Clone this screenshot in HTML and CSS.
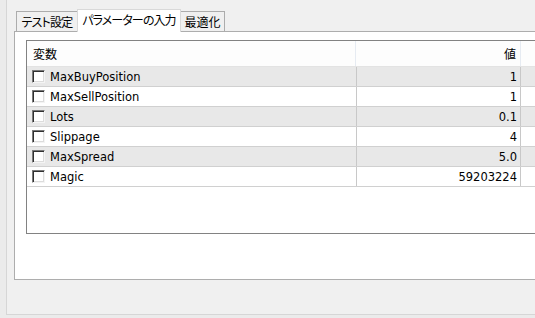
FILE: index.html
```html
<!DOCTYPE html>
<html lang="ja">
<head>
  <meta charset="UTF-8" />
  <title>テスター</title>
  <link rel="stylesheet" href="styles.css">
</head>
<body>
  <div class="frame">
    <div class="tabs">
      <div class="tab tab-test">テスト設定</div>
      <div class="tab tab-params active">パラメーターの入力</div>
      <div class="tab tab-opt">最適化</div>
    </div>
    <div class="panel">
      <div class="list">
        <div class="list-head">
          <div class="col-name">変数</div>
          <div class="col-value">値</div>
          <div class="col-rest"></div>
        </div>
        <div class="row">
          <div class="col-name"><span class="check"></span>MaxBuyPosition</div>
          <div class="col-value">1</div>
          <div class="col-rest"></div>
        </div>
        <div class="row">
          <div class="col-name"><span class="check"></span>MaxSellPosition</div>
          <div class="col-value">1</div>
          <div class="col-rest"></div>
        </div>
        <div class="row">
          <div class="col-name"><span class="check"></span>Lots</div>
          <div class="col-value">0.1</div>
          <div class="col-rest"></div>
        </div>
        <div class="row">
          <div class="col-name"><span class="check"></span>Slippage</div>
          <div class="col-value">4</div>
          <div class="col-rest"></div>
        </div>
        <div class="row">
          <div class="col-name"><span class="check"></span>MaxSpread</div>
          <div class="col-value">5.0</div>
          <div class="col-rest"></div>
        </div>
        <div class="row">
          <div class="col-name"><span class="check"></span>Magic</div>
          <div class="col-value">59203224</div>
          <div class="col-rest"></div>
        </div>
      </div>
    </div>
  </div>
</body>
</html>
```

FILE: styles.css
```css
:root {
  --window: #f0f0f0;
  --outside: #ebebeb;
  --frame-line: #d6d6d6;
  --tab-line: #acacac;
  --panel-line: #adadad;
  --list-line: #828282;
  --grid-line: #d0d0d0;
  --row-alt: #e8e8e8;
}

* {
  margin: 0;
  padding: 0;
  box-sizing: border-box;
}

body {
  width: 535px;
  height: 318px;
  overflow: hidden;
  background: var(--outside);
  color: #000;
  font-family: "DejaVu Sans", "Noto Sans CJK JP", sans-serif;
  font-size: 11.5px;
}

/* the window runs on past the right edge of the shot, so no right borders */
.frame {
  width: 529px;
  height: 315px;
  margin-left: 6px;
  padding-left: 7px;
  background: var(--window);
  border-left: 1px solid var(--frame-line);
  border-bottom: 1px solid var(--frame-line);
}

/* tab strip */
.tabs {
  position: relative;
  z-index: 1;
  display: flex;
  align-items: flex-end;
  height: 32px;
  padding: 9px 0 0 2px;
  margin-bottom: -1px;
  font-family: "Noto Sans CJK JP", sans-serif;
  font-feature-settings: "palt";
  font-size: 12px;
}

.tab {
  height: 20px;
  margin-bottom: 1px;
  display: flex;
  align-items: center;
  justify-content: center;
  background: #f0f0f0;
  border: 1px solid var(--tab-line);
  border-bottom: none;
  line-height: 1;
}

.tab-test {
  width: 61px;
  border-right: none;
  letter-spacing: -0.8px;
}

.tab-params {
  width: 104px;
  letter-spacing: -0.9px;
}

.tab-opt {
  width: 44px;
  border-left: none;
}

.tab.active {
  height: 23px;
  margin-bottom: 0;
  background: #fff;
  border-color: #d9d9d9;
  padding-bottom: 2px;
}

/* tab page */
.panel {
  height: 249px;
  padding: 8px 0 0 11px;
  background: #fff;
  border: 1px solid var(--panel-line);
  border-right: none;
}

.list {
  height: 194px;
  background: #fff;
  border: 1px solid var(--list-line);
  border-right: none;
}

.list-head,
.row {
  display: grid;
  grid-template-columns: 329px 165px 1fr;
}

.list-head {
  height: 26px;
  background: #fdfdfd;
  border-bottom: 1px solid #e3e3e3;
  font-family: "Noto Sans CJK JP", sans-serif;
  font-size: 12px;
}

.list-head > div {
  display: flex;
  align-items: center;
  border-right: 1px solid #e6ebf2;
}

.list-head .col-name {
  padding-left: 6px;
}

.list-head .col-value {
  justify-content: flex-end;
  padding-right: 4px;
}

.row {
  height: 20px;
  border-bottom: 1px solid var(--grid-line);
}

.row:nth-child(even) {
  background: var(--row-alt);
}

.row > div {
  display: flex;
  align-items: center;
  border-right: 1px solid #c8c8c8;
}

.row .col-name {
  padding-left: 5px;
  border-right: none;
}

.row .col-value {
  justify-content: flex-end;
  padding-right: 3px;
  border-left: 1px solid #c8c8c8;
}

.col-rest {
  border-right: none !important;
}

.check {
  width: 13px;
  height: 13px;
  margin-right: 5px;
  background: #fff;
  border: 1px solid;
  border-color: #7a7a7a #f4f4f4 #f4f4f4 #7a7a7a;
  box-shadow: inset 1px 1px #303030, inset -1px -1px #dcdcdc;
}
```
